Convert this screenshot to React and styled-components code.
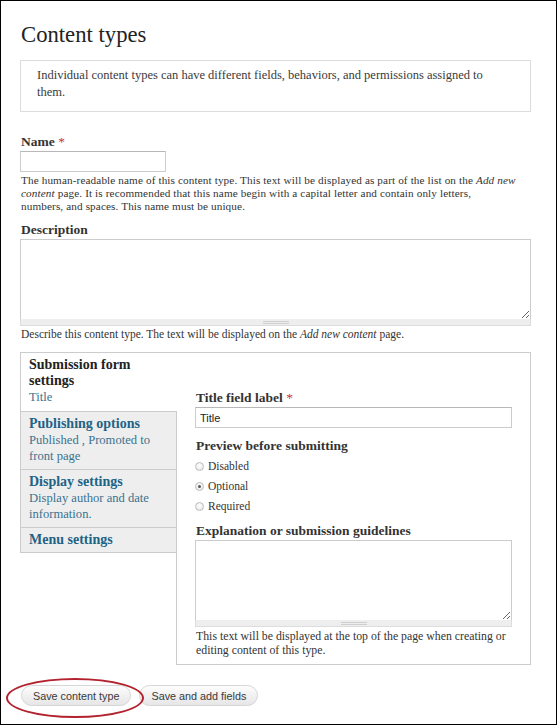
import React from 'react';
import styled, { createGlobalStyle } from 'styled-components';

const GlobalStyle = createGlobalStyle`
    body {
        margin: 0;
        background: #fff;
    }
`;

const Frame = styled.div`
    width: 557px;
    height: 725px;
    box-sizing: border-box;
    border: 1px solid #000;
    padding: 20px 25px 0 19px;
    background: #fff;
    font-family: "Liberation Serif", "Times New Roman", serif;
    color: #333;
    overflow: hidden;
`;

const Title = styled.h1`
    margin: 0;
    padding-left: 1px;
    font-size: 22.7px;
    line-height: 28px;
    font-weight: normal;
    color: #222;
`;

const Intro = styled.div`
    margin-top: 11px;
    border: 1px solid #dcdcdc;
    padding: 6px 16px 10px;
    font-size: 12.5px;
    line-height: 17px;
    color: #3a3a3a;
`;

const Label = styled.div`
    margin-top: ${p => p.$top || 0}px;
    padding-left: 1px;
    font-size: 13.5px;
    line-height: 16px;
    font-weight: bold;
    color: #333;
`;

const Star = styled.span`
    color: #c33;
    font-weight: normal;
`;

const TextInput = styled.input`
    display: block;
    width: ${p => p.$width}px;
    height: 21px;
    box-sizing: border-box;
    margin: 1px 0 0;
    padding: 0 4px;
    border: 1px solid #ccc;
    border-top-color: #b8b8b8;
    font-family: "Liberation Sans", Arial, sans-serif;
    font-size: 11px;
    color: #222;
    outline: none;
`;

const Help = styled.div`
    margin-top: 2px;
    padding-left: 1px;
    font-size: ${p => p.$size || 11.5}px;
    letter-spacing: ${p => p.$spacing || 0}px;
    line-height: ${p => p.$lh || 13}px;
    color: #333;
`;

const AreaWrap = styled.div`
    margin-top: 1px;
`;

const Area = styled.textarea`
    display: block;
    width: 100%;
    height: ${p => p.$height}px;
    box-sizing: border-box;
    margin: 0;
    border: 1px solid #ccc;
    border-bottom: none;
    resize: vertical;
    outline: none;
`;

const Grip = styled.div`
    height: 7px;
    box-sizing: border-box;
    border: 1px solid #ddd;
    border-top: none;
    background: #eee;
    display: flex;
    align-items: center;
    justify-content: center;
`;

const GripHandle = styled.div`
    width: 26px;
    height: 3px;
    border-top: 1px solid #cfcfcf;
    border-bottom: 1px solid #cfcfcf;
    box-sizing: border-box;
`;

const Tabs = styled.div`
    display: flex;
    margin-top: 11px;
`;

const Menu = styled.ul`
    width: 156px;
    margin: 0;
    padding: 0;
    list-style: none;
    align-self: flex-start;
    box-sizing: border-box;
    border: 1px solid #ccc;
    border-right: none;
`;

const MenuItem = styled.li`
    position: relative;
    z-index: 1;
    padding: 4px 8px ${p => p.$bottom}px;
    border-top: ${p => (p.$first ? 'none' : '1px solid #ccc')};
    margin-right: ${p => (p.$selected ? '-1px' : '0')};
    background: ${p => (p.$selected ? '#fff' : '#eee')};
`;

const MenuTitle = styled.div`
    font-size: 14px;
    line-height: 16px;
    font-weight: bold;
    color: ${p => (p.$selected ? '#222' : '#1f6386')};
`;

const MenuSummary = styled.div`
    font-size: 12.6px;
    line-height: 16px;
    color: #3b7290;
`;

const Pane = styled.div`
    flex: 1;
    box-sizing: border-box;
    border: 1px solid #ccc;
    padding: 37px 18px 7px;
`;

const RadioList = styled.div`
    margin-top: 2px;
`;

const Radio = styled.label`
    display: flex;
    align-items: center;
    gap: 4px;
    height: 20px;
    font-size: 11.5px;
    color: #333;
`;

const RadioDot = styled.span`
    width: 9px;
    height: 9px;
    box-sizing: border-box;
    border-radius: 50%;
    border: 1px solid #bdbdbd;
    background: radial-gradient(circle at 50% 40%, #fff 0%, #e4e4e4 100%);
    display: flex;
    align-items: center;
    justify-content: center;

    &::after {
        content: '';
        width: 3px;
        height: 3px;
        border-radius: 50%;
        background: ${p => (p.$checked ? '#555' : 'transparent')};
    }
`;

const Actions = styled.div`
    position: relative;
    display: flex;
    gap: 8px;
    margin: 20px 0 0 1px;
`;

const Button = styled.button`
    height: 21px;
    padding: 0 11px;
    border: 1px solid #d6d6d6;
    border-radius: 11px;
    background: linear-gradient(#fdfdfd, #e6e6e6);
    font-family: "Liberation Sans", Arial, sans-serif;
    font-size: 10.8px;
    color: #3a3a3a;
`;

const Circle = styled.div`
    position: absolute;
    left: -15px;
    top: -7px;
    width: 138px;
    height: 40px;
    box-sizing: border-box;
    border: 2px solid #b3232e;
    border-radius: 50%;
    pointer-events: none;
`;

const tabs = [
    { title: 'Submission form settings', summary: 'Title', selected: true, bottom: 6 },
    { title: 'Publishing options', summary: 'Published , Promoted to front page', bottom: 5 },
    { title: 'Display settings', summary: 'Display author and date information.', bottom: 5 },
    { title: 'Menu settings', bottom: 4 },
];

const TextArea = ({ height }) => (
    <AreaWrap>
        <Area $height={height} />
        <Grip>
            <GripHandle />
        </Grip>
    </AreaWrap>
);

const App = () => {
    return (
        <Frame>
            <GlobalStyle />
            <Title>Content types</Title>
            <Intro>
                Individual content types can have different fields, behaviors, and permissions assigned to them.
            </Intro>

            <Label $top={22}>Name <Star>*</Star></Label>
            <TextInput $width={146} />
            <Help $size={11.2} $spacing={0.12}>
                The human-readable name of this content type. This text will be displayed as part of the list on the <i>Add new content</i> page. It is recommended that this name begin with a capital letter and contain only letters,<br />
                numbers, and spaces. This name must be unique.
            </Help>

            <Label $top={9}>Description</Label>
            <TextArea height={80} />
            <Help>
                Describe this content type. The text will be displayed on the <i>Add new content</i> page.
            </Help>

            <Tabs>
                <Menu>
                    {tabs.map((t, i) => (
                        <MenuItem key={t.title} $first={i === 0} $selected={t.selected} $bottom={t.bottom}>
                            <MenuTitle $selected={t.selected}>{t.title}</MenuTitle>
                            {t.summary && <MenuSummary>{t.summary}</MenuSummary>}
                        </MenuItem>
                    ))}
                </Menu>
                <Pane>
                    <Label>Title field label <Star>*</Star></Label>
                    <TextInput $width={317} defaultValue="Title" />

                    <Label $top={10}>Preview before submitting</Label>
                    <RadioList>
                        <Radio><RadioDot />Disabled</Radio>
                        <Radio><RadioDot $checked />Optional</Radio>
                        <Radio><RadioDot />Required</Radio>
                    </RadioList>

                    <Label $top={7}>Explanation or submission guidelines</Label>
                    <TextArea height={80} />
                    <Help $lh={14} $size={11.8}>
                        This text will be displayed at the top of the page when creating or editing content of this type.
                    </Help>
                </Pane>
            </Tabs>

            <Actions>
                <Button>Save content type</Button>
                <Button>Save and add fields</Button>
                <Circle />
            </Actions>
        </Frame>
    );
};

export default App;
